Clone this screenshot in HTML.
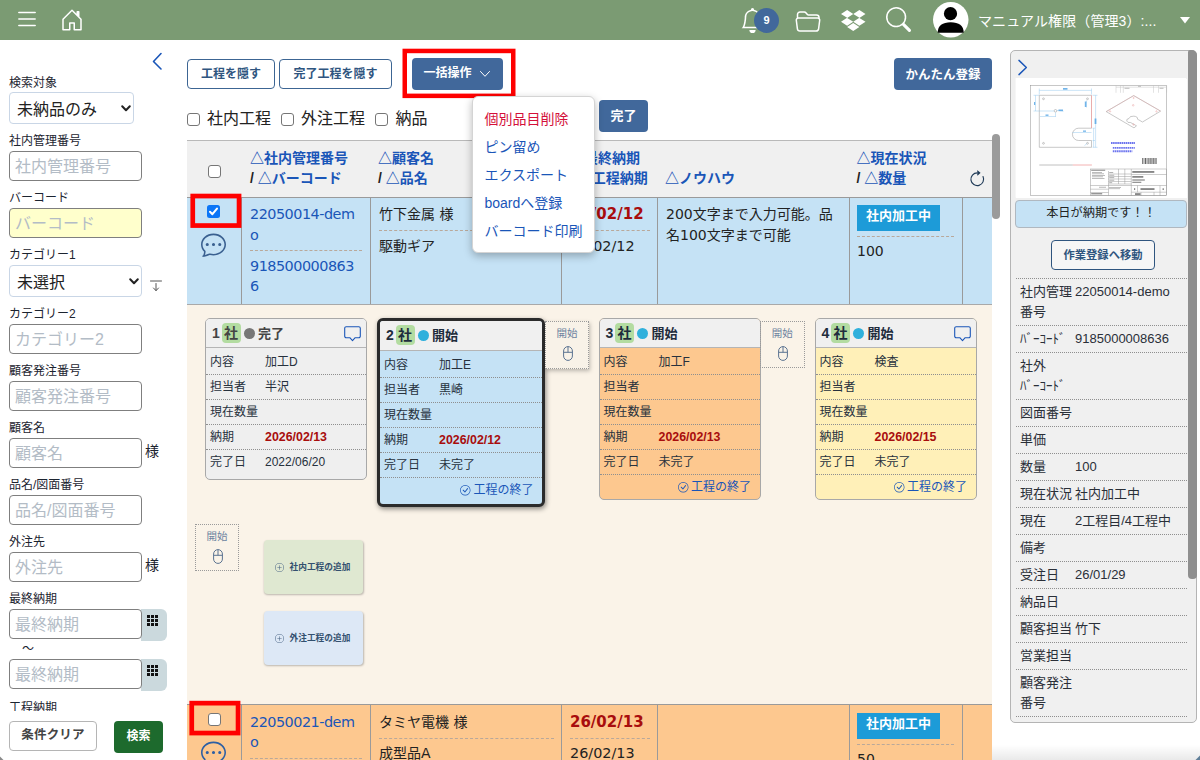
<!DOCTYPE html>
<html lang="ja">
<head>
<meta charset="utf-8">
<title>工程管理</title>
<style>
*{box-sizing:border-box;}
html,body{margin:0;padding:0;}
body{width:1200px;height:760px;overflow:hidden;background:#fff;position:relative;
  font-family:"Liberation Sans","Noto Sans CJK JP",sans-serif;color:#222;font-size:14px;}
.abs{position:absolute;}
svg{display:block;overflow:visible;}
/* header */
#hdr{position:absolute;left:0;top:0;width:1200px;height:40px;background:#7b9b73;}
#hdr .uname{position:absolute;left:978px;top:10px;font-size:14px;color:#fff;white-space:nowrap;line-height:22px;letter-spacing:0.1px;}
#hdr svg{position:absolute;}
.badge9{position:absolute;left:754px;top:7.5px;width:25px;height:25px;border-radius:50%;background:#41689b;color:#fff;
  font-size:11px;font-weight:bold;text-align:center;line-height:25px;}
/* sidebar */
#side{position:absolute;left:0;top:0;width:180px;height:760px;}
#side .lbl{position:absolute;left:9px;font-size:12px;color:#1c2430;line-height:16px;white-space:nowrap;margin-top:1px;}
#side .inp{position:absolute;left:9px;width:133px;height:30px;border:1px solid #7f7f7f;border-radius:4px;background:#fff;
  font-size:16px;color:#b3bcc6;padding:1px 0 0 5px;line-height:28px;white-space:nowrap;overflow:hidden;}
#side .sel{position:absolute;left:9px;height:32px;border:1px solid #c9d6e6;border-radius:4px;background:#fff;
  font-size:16px;color:#222;padding:1.500px 0 0 7px;line-height:30px;white-space:nowrap;}
#side .sama{position:absolute;left:145px;font-size:14px;color:#1c2430;line-height:18px;}
#side .cal{position:absolute;left:141px;width:26px;height:32px;background:#cbd9dd;border-radius:0 6px 6px 0;}
/* main */
.btn-o{position:absolute;height:30px;border:1px solid #3c6593;border-radius:4px;background:#fff;color:#2f557f;
  font-size:12px;font-weight:bold;line-height:28px;text-align:center;white-space:nowrap;}
.btn-f{position:absolute;border-radius:4px;background:#41689b;color:#fff;
  font-size:12px;font-weight:bold;text-align:center;white-space:nowrap;}
.tv{font-family:"DejaVu Sans","Noto Sans CJK JP",sans-serif;}
.cb{position:absolute;width:13px;height:13px;border:1px solid #767676;border-radius:3px;background:#fff;}
.redbox{position:absolute;border:4.5px solid #ff0000;}

.th{position:absolute;font-family:"Liberation Sans","Noto Sans CJK JP",sans-serif;font-weight:bold;font-size:14px;line-height:20px;color:#1a56b8;white-space:nowrap;}
.th .sl{color:#222;}
.vl{position:absolute;width:1px;background:#9a9a9a;}
.row{border-top:1px solid #9a9a9a;}
.lk{color:#1a56b8;font-size:14.400px;letter-spacing:-0.500px;}
.dsh{position:absolute;height:0;border-top:1px dashed #b9a89a;}
.stat{background:#1d9bd8;color:#fff;font-family:"Liberation Sans","Noto Sans CJK JP",sans-serif;font-weight:bold;font-size:13px;width:83px;height:26px;line-height:21.500px;text-align:center;}

.card{position:absolute;width:162px;border:1px solid #a8a8a8;border-radius:5px;overflow:hidden;font-family:"Liberation Sans","Noto Sans CJK JP",sans-serif;font-size:12px;color:#27313d;box-sizing:border-box;}
.card .hd{position:relative;height:28.500px;background:#f0f0f0;border-bottom:1px solid #b5b5b5;font-weight:bold;line-height:29px;color:#444;}
.card .hd .n{font-size:14px;}
.card .hd .bd{left:15.500px;top:4px;width:19px;height:20px;border-radius:4px;background:#b3dca1;font-size:14px;line-height:20px;text-align:center;}
.card .hd .dot{left:37.500px;top:9px;width:11px;height:11px;border-radius:50%;}
.card .hd .st{left:52px;top:0;font-size:13px;}
.card .r{position:relative;height:25px;border-top:1px dotted #8f8f8f;line-height:25px;white-space:nowrap;}
.card .r.first{border-top:none;height:26.500px;line-height:28px;}
.card .r .l{position:absolute;left:4px;}
.card .r .v{position:absolute;left:59px;}
.card .r .due{color:#a80d0d;font-size:12.400px;}
.card .hd.nv{color:#1f2d3d;}
.card .r .e{right:8.500px;top:0;font-size:12px;color:#1a56b8;}
.card.sel2 .hd{height:29.750px;}
.card.sel2{width:168px;border:3px solid #2b2b2b;border-radius:6px;box-shadow:1px 2px 5px rgba(0,0,0,0.45);}
.sb{position:absolute;border:1px dotted #9a9a9a;font-family:"Liberation Sans","Noto Sans CJK JP",sans-serif;font-size:10.500px;line-height:14px;color:#6d83a0;}
.add{position:absolute;width:99px;height:54px;border-radius:4px;box-shadow:0.500px 1px 2px rgba(0,0,0,0.25);font-family:"Liberation Sans","Noto Sans CJK JP",sans-serif;font-size:8.700px;font-weight:bold;color:#33506f;line-height:54px;white-space:nowrap;}

#panel{position:absolute;left:1010px;top:50px;width:187px;height:672.500px;background:#f0f0f0;border:1px solid #b4b4b4;border-radius:5px;font-size:13px;color:#2a2f38;}
.pr{position:absolute;left:5px;width:171px;border-top:1px dotted #8f8f8f;line-height:20px;padding-top:3px;}
.pr .pl{position:absolute;left:4px;top:2.500px;white-space:nowrap;}
.pr .pv{position:absolute;left:59px;top:2.500px;white-space:nowrap;}
</style>
</head>
<body>
<!--HEADER-->
<div id="hdr">
  <svg style="left:13.9px;top:6.4px" width="26" height="26" viewBox="0 0 16 16" fill="#fff"><path fill-rule="evenodd" d="M2.5 12a.5.5 0 0 1 .5-.5h10a.5.5 0 0 1 0 1H3a.5.5 0 0 1-.5-.5zm0-4a.5.5 0 0 1 .5-.5h10a.5.5 0 0 1 0 1H3a.5.5 0 0 1-.5-.5zm0-4a.5.5 0 0 1 .5-.5h10a.5.5 0 0 1 0 1H3a.5.5 0 0 1-.5-.5z"/></svg>
  <svg style="left:60px;top:7.5px" width="24" height="24" viewBox="0 0 16 16" fill="#fff"><path d="M8.354 1.146a.5.5 0 0 0-.708 0l-6 6A.5.5 0 0 0 1.500 7.500v7a.5.5 0 0 0 .5.5h4.500a.5.5 0 0 0 .5-.5v-4h2v4a.5.5 0 0 0 .5.5H14a.5.5 0 0 0 .5-.5v-7a.5.5 0 0 0-.146-.354L13 5.793V2.500a.5.5 0 0 0-.5-.5h-1a.5.5 0 0 0-.5.5v1.293L8.354 1.146zM2.500 14V7.707l5.500-5.500 5.500 5.500V14H10v-4a.5.5 0 0 0-.5-.5h-3a.5.5 0 0 0-.5.5v4H2.500z"/></svg>
  <svg style="left:740.4px;top:8px" width="25" height="25" viewBox="0 0 16 16" fill="#fff"><path d="M8 16a2 2 0 0 0 2-2H6a2 2 0 0 0 2 2zM8 1.918l-.797.161A4.002 4.002 0 0 0 4 6c0 .628-.134 2.197-.459 3.742-.16.767-.376 1.566-.663 2.258h10.244c-.287-.692-.502-1.490-.663-2.258C12.134 8.197 12 6.628 12 6a4.002 4.002 0 0 0-3.203-3.920L8 1.917zM14.220 12c.223.447.481.801.780 1H1c.299-.199.557-.553.780-1C2.680 10.200 3 6.880 3 6c0-2.420 1.720-4.440 4.005-4.901a1 1 0 1 1 1.990 0A5.002 5.002 0 0 1 13 6c0 .880.320 4.200 1.220 6z"/></svg>
  <div class="badge9">9</div>
  <svg style="left:795px;top:8.500px" width="26" height="24" viewBox="0 0 26 24" fill="none" stroke="#fff" stroke-width="1.500" stroke-linejoin="round" stroke-linecap="round"><path d="M2.500 8.500V5.500a2.500 2.500 0 0 1 2.500-2.500h4.200a2.500 2.500 0 0 1 1.900.9l1.300 1.500a1.500 1.500 0 0 0 1.100.5h8a2.500 2.500 0 0 1 2.500 2.500v.6"/><path d="M3.300 9h19.400a2 2 0 0 1 2 2.250l-1.100 8.600a2.500 2.500 0 0 1-2.500 2.150H4.900a2.500 2.500 0 0 1-2.500-2.150l-1.100-8.600A2 2 0 0 1 3.300 9z"/></svg>
  <svg style="left:840.8px;top:6.900px" width="24.500" height="24.500" viewBox="0 0 16 16" fill="#fff"><path d="M8.010 4.555 4.005 7.110 8.010 9.665 4.005 12.220 0 9.651l4.005-2.555L0 4.555 4.005 2 8.010 4.555zm-4.026 8.487 4.006-2.555 4.005 2.555-4.005 2.555-4.006-2.555zm4.026-3.390 4.005-2.556L8.010 4.555 11.995 2 16 4.555 11.995 7.110 16 9.665l-4.005 2.555L8.010 9.651z"/></svg>
  <svg style="left:885.6px;top:7.300px" width="25" height="25" viewBox="0 0 16 16" fill="#fff"><path d="M11.742 10.344a6.500 6.500 0 1 0-1.397 1.398h-.001c.030.040.062.078.098.115l3.850 3.850a1 1 0 0 0 1.415-1.414l-3.850-3.850a1.007 1.007 0 0 0-.115-.100zM12 6.500a5.500 5.500 0 1 1-11 0 5.500 5.500 0 0 1 11 0z"/></svg>
  <svg style="left:932.8px;top:2.300px" width="35.500" height="35.500" viewBox="0 0 35.500 35.500"><circle cx="17.750" cy="17.750" r="17.750" fill="#fff"/><circle cx="17.500" cy="11.700" r="6.600" fill="#000"/><path d="M4.700 30.700C4.700 23.500 9.500 20.200 17.700 20.200C25.900 20.200 30.700 23.500 30.700 30.700Z" fill="#000"/></svg>
  <div class="uname">マニュアル権限（管理3）:...</div>
  <svg style="left:1180px;top:16.800px" width="10" height="6.500" viewBox="0 0 10 6.500"><path d="M0 0h10L5 6.500z" fill="#fff"/></svg>
</div>
<!--/HEADER-->
<!--SIDE-->
<div id="side">
  <svg class="abs" style="left:152px;top:52px" width="10" height="18" viewBox="0 0 10 18" fill="none" stroke="#1a56b8" stroke-width="1.600" stroke-linecap="round" stroke-linejoin="round"><path d="M9 1.500L1.500 9.500L9 17"/></svg>
  <div class="lbl" style="top:74px">検索対象</div>
  <div class="sel" style="top:92px;width:125px;border-color:#c9d6e6">未納品のみ<svg class="abs" style="left:111px;top:12px" width="10" height="7" viewBox="0 0 10 7" fill="none" stroke="#222" stroke-width="2" stroke-linecap="round" stroke-linejoin="round"><path d="M1.200 1.200L5 5.200L8.800 1.200"/></svg></div>
  <div class="lbl" style="top:132px">社内管理番号</div>
  <div class="inp" style="top:151px">社内管理番号</div>
  <div class="lbl" style="top:189px">バーコード</div>
  <div class="inp" style="top:208px;background:#ffffcc">バーコード</div>
  <div class="lbl" style="top:246px">カテゴリー1</div>
  <div class="sel" style="top:265px;width:133px">未選択<svg class="abs" style="left:119px;top:12px" width="10" height="7" viewBox="0 0 10 7" fill="none" stroke="#222" stroke-width="2" stroke-linecap="round" stroke-linejoin="round"><path d="M1.200 1.200L5 5.200L8.800 1.200"/></svg></div>
  <svg class="abs" style="left:150px;top:280px" width="12" height="12" viewBox="0 0 12 12" fill="none" stroke="#555" stroke-width="1" stroke-linecap="round" stroke-linejoin="round"><path d="M0.500 1H11.500M6 3.500V10.500M3.500 8L6 10.700L8.500 8"/></svg>
  <div class="lbl" style="top:305px">カテゴリー2</div>
  <div class="inp" style="top:324px">カテゴリー2</div>
  <div class="lbl" style="top:362px">顧客発注番号</div>
  <div class="inp" style="top:381px">顧客発注番号</div>
  <div class="lbl" style="top:419px">顧客名</div>
  <div class="inp" style="top:438px">顧客名</div>
  <div class="sama" style="top:442px">様</div>
  <div class="lbl" style="top:476px">品名/図面番号</div>
  <div class="inp" style="top:495px">品名/図面番号</div>
  <div class="lbl" style="top:533px">外注先</div>
  <div class="inp" style="top:552px">外注先</div>
  <div class="sama" style="top:556px">様</div>
  <div class="lbl" style="top:590px">最終納期</div>
  <div class="cal" style="top:609px"><svg class="abs" style="left:6px;top:6px" width="11" height="11" viewBox="0 0 11 11" fill="#111"><path d="M0 0h3v3h-3zM4 0h3v3h-3zM8 0h3v3h-3zM0 4h3v3h-3zM4 4h3v3h-3zM8 4h3v3h-3zM0 8h3v3h-3zM4 8h3v3h-3zM8 8h3v3h-3z"/></svg></div>
  <div class="inp" style="top:609px">最終納期</div>
  <div class="lbl" style="top:640px;left:22px;font-size:12px">～</div>
  <div class="cal" style="top:659px"><svg class="abs" style="left:6px;top:6px" width="11" height="11" viewBox="0 0 11 11" fill="#111"><path d="M0 0h3v3h-3zM4 0h3v3h-3zM8 0h3v3h-3zM0 4h3v3h-3zM4 4h3v3h-3zM8 4h3v3h-3zM0 8h3v3h-3zM4 8h3v3h-3zM8 8h3v3h-3z"/></svg></div>
  <div class="inp" style="top:659px">最終納期</div>
  <div class="abs" style="left:0;top:696px;width:180px;height:14.500px;overflow:hidden"><div class="lbl" style="top:3.300px">工程納期</div></div>
  <div class="abs" style="left:9px;top:721px;width:88px;height:30px;border:1px solid #b5b5b5;border-radius:4px;background:#fff;font-size:12.500px;font-weight:bold;color:#444;text-align:center;line-height:27px;letter-spacing:0.2px">条件クリア</div>
  <div class="abs" style="left:114px;top:721px;width:49px;height:32px;border-radius:4px;background:#1d6a2d;font-size:12px;font-weight:bold;color:#fff;text-align:center;line-height:30px">検索</div>
</div>
<!--/SIDE-->
<!--MAIN-->
<div id="main">
  <div class="btn-o" style="left:187px;top:59px;width:88px">工程を隠す</div>
  <div class="btn-o" style="left:279px;top:59px;width:113px">完了工程を隠す</div>
  <svg class="abs" style="left:402px;top:48px" width="115" height="52" viewBox="0 0 115 52"><rect x="2.75" y="2.95" width="108.50" height="44.90" fill="none" stroke="#ff0000" stroke-width="4.5"/></svg>
  <div class="btn-f" style="left:412px;top:58px;width:91px;height:31.500px;line-height:31px;text-align:left;padding-left:11.500px">一括操作<svg class="abs" style="left:68px;top:13px" width="10" height="6" viewBox="0 0 10 6" fill="none" stroke="#fff" stroke-width="1" stroke-linecap="round" stroke-linejoin="round"><path d="M0.500 0.500L5 5.300L9.500 0.500"/></svg></div>
  <div class="btn-f" style="left:894px;top:58px;width:98px;height:31.500px;line-height:34px;font-size:12.500px">かんたん登録</div>
  <div class="cb" style="left:187px;top:113px"></div><div class="abs" style="left:207px;top:108px;font-size:16px;line-height:22px;color:#222">社内工程</div>
  <div class="cb" style="left:280.500px;top:113px"></div><div class="abs" style="left:301px;top:108px;font-size:16px;line-height:22px;color:#222">外注工程</div>
  <div class="cb" style="left:375px;top:113px"></div><div class="abs" style="left:395.500px;top:108px;font-size:16px;line-height:22px;color:#222">納品</div>
  <div class="btn-f" style="left:599px;top:100px;width:49px;height:32px;line-height:31px;font-size:13px">完了</div>
  <div id="tbl" class="abs tv" style="left:187px;top:140px;width:805px;height:620px;overflow:hidden;font-size:14px;line-height:20.500px;color:#222">
    <!-- header -->
    <div class="abs" style="left:0;top:0;width:805px;height:57px;background:#f0f0f0;border-top:1px solid #b9b9b9"></div>
    <div class="cb" style="left:21px;top:24.500px"></div>
    <div class="th" style="left:63px;top:8px">△社内管理番号<br><span class="sl">/ </span>△バーコード</div>
    <div class="th" style="left:191px;top:8px">△顧客名<br><span class="sl">/ </span>△品名</div>
    <div class="th" style="left:383px;top:8px">△最終納期<br><span class="sl">/ </span>△工程納期</div>
    <div class="th" style="left:478px;top:28px">△ノウハウ</div>
    <div class="th" style="left:669.500px;top:8px">△現在状況<br><span class="sl">/ </span>△数量</div>
    <svg class="abs" style="left:781px;top:30px" width="18.500" height="18.500" viewBox="0 0 16 16" fill="#1f3a57"><path fill-rule="evenodd" d="M8 3a5 5 0 1 0 4.546 2.914.5.5 0 0 1 .908-.417A6 6 0 1 1 8 2v1z"/><path d="M8 4.466V.534a.25.25 0 0 1 .41-.192l2.360 1.966c.12.1.12.284 0 .384L8.410 4.658A.25.25 0 0 1 8 4.466z"/></svg>
    <!-- row1 -->
    <div class="abs row" style="left:0;top:57px;width:805px;height:107px;background:#c5e2f5"></div>
    <div class="vl" style="left:54px;top:57px;height:107px"></div>
    <div class="vl" style="left:183px;top:57px;height:107px"></div>
    <div class="vl" style="left:374px;top:57px;height:107px"></div>
    <div class="vl" style="left:470px;top:57px;height:107px"></div>
    <div class="vl" style="left:661.500px;top:57px;height:107px"></div>
    <div class="vl" style="left:775px;top:57px;height:107px"></div>
    <div class="abs" style="left:20.200px;top:65px;width:13px;height:13px;border-radius:2.500px;background:#0b76f7"><svg width="13" height="13" viewBox="0 0 13 13" fill="none" stroke="#fff" stroke-width="2" stroke-linecap="round" stroke-linejoin="round"><path d="M3 6.800L5.400 9.200L10 3.600"/></svg></div>
    <svg class="abs" style="left:14px;top:91.500px" width="25" height="25" viewBox="0 0 16 16" fill="#3a6090"><path d="M5 8a1 1 0 1 1-2 0 1 1 0 0 1 2 0zm4 0a1 1 0 1 1-2 0 1 1 0 0 1 2 0zm3 1a1 1 0 1 0 0-2 1 1 0 0 0 0 2z"/><path d="m2.165 15.803.02-.004c1.830-.363 2.948-.842 3.468-1.105A9.060 9.060 0 0 0 8 15c4.418 0 8-3.134 8-7s-3.582-7-8-7-8 3.134-8 7c0 1.760.743 3.370 1.970 4.600a10.437 10.437 0 0 1-.524 2.318l-.3.011a10.722 10.722 0 0 1-.244.637c-.79.186.74.394.273.362a21.673 21.673 0 0 0 .693-.125zm.800-3.108a1 1 0 0 0-.287-.801C1.618 10.830 1 9.468 1 8c0-3.192 3.004-6 7-6s7 2.808 7 6c0 3.193-3.004 6-7 6a8.060 8.060 0 0 1-2.088-.272 1 1 0 0 0-.711.074c-.387.196-1.240.570-2.634.893a10.970 10.970 0 0 0 .398-2z"/></svg>
    <div class="abs lk" style="left:63px;top:64px;width:113px;white-space:nowrap">22050014-dem<br>o</div>
    <div class="dsh" style="left:63px;top:110px;width:112px"></div>
    <div class="abs lk" style="left:63px;top:115.500px;width:113px;white-space:nowrap">918500000863<br>6</div>
    <div class="abs" style="left:192px;top:64px">竹下金属 様</div>
    <div class="dsh" style="left:192px;top:90px;width:175px"></div>
    <div class="abs" style="left:192px;top:95.500px">駆動ギア</div>
    <div class="abs" style="left:383px;top:64px;font-weight:bold;color:#a80d0d;font-size:15px">26/02/12</div>
    <div class="dsh" style="left:383px;top:90px;width:80px"></div>
    <div class="abs" style="left:383px;top:95.500px;font-size:14.400px">26/02/12</div>
    <div class="abs" style="left:479px;top:64px;width:175px;word-break:break-all">200文字まで入力可能。品名100文字まで可能</div>
    <div class="abs stat" style="left:670px;top:65px">社内加工中</div>
    <div class="dsh" style="left:670px;top:96px;width:97px"></div>
    <div class="abs" style="left:670px;top:101px">100</div>
    <!-- detail -->
    <div class="abs" style="left:0;top:164px;width:805px;height:400px;background:#faf3e8;border-top:1px solid #a9a9a9"></div>
<!--CARDS-->
<div class="card" style="left:18px;top:178px;height:162px;background:#efefef"><div class="hd"><span class="abs n" style="left:6px;top:0">1</span><span class="abs bd">社</span><span class="abs dot" style="background:#777"></span><span class="abs st">完了</span><svg class="abs" style="left:138px;top:6.500px" width="17" height="16" viewBox="0 0 17 16" fill="none" stroke="#1a56b8" stroke-width="1.100" stroke-linejoin="round"><path d="M2.200 0.700H14.800A1.500 1.500 0 0 1 16.300 2.200V10.200A1.500 1.500 0 0 1 14.800 11.700H11.200L8.500 14.600L5.800 11.700H2.200A1.500 1.500 0 0 1 0.700 10.200V2.200A1.500 1.500 0 0 1 2.200 0.700Z"/></svg></div><div class="r first"><span class="l">内容</span><span class="v">加工D</span></div><div class="r"><span class="l">担当者</span><span class="v">半沢</span></div><div class="r"><span class="l">現在数量</span><span class="v"></span></div><div class="r"><span class="l">納期</span><span class="v"><b class="due">2026/02/13</b></span></div><div class="r"><span class="l">完了日</span><span class="v">2022/06/20</span></div></div>
<div class="card sel2" style="left:190px;top:178px;height:188.500px;background:#c5e2f5"><div class="hd nv"><span class="abs n" style="left:6px;top:0">2</span><span class="abs bd">社</span><span class="abs dot" style="background:#30b0dc"></span><span class="abs st">開始</span></div><div class="r first"><span class="l">内容</span><span class="v">加工E</span></div><div class="r"><span class="l">担当者</span><span class="v">黒崎</span></div><div class="r"><span class="l">現在数量</span><span class="v"></span></div><div class="r"><span class="l">納期</span><span class="v"><b class="due">2026/02/12</b></span></div><div class="r"><span class="l">完了日</span><span class="v">未完了</span></div><div class="r end"><svg class="abs" style="right:71.5px;top:7px" width="10.500" height="10.500" viewBox="0 0 16 16" fill="#1a56b8"><path d="M8 15A7 7 0 1 1 8 1a7 7 0 0 1 0 14zm0 1A8 8 0 1 0 8 0a8 8 0 0 0 0 16z"/><path d="M10.970 4.970a.235.235 0 0 0-.020.022L7.477 9.417 5.384 7.323a.750.750 0 0 0-1.060 1.060L6.970 11.030a.750.750 0 0 0 1.079-.020l3.992-4.990a.750.750 0 0 0-1.071-1.050z"/></svg><span class="abs e">工程の終了</span></div></div>
<div class="card" style="left:411.500px;top:178px;height:182px;background:#fdc88f"><div class="hd nv"><span class="abs n" style="left:6px;top:0">3</span><span class="abs bd">社</span><span class="abs dot" style="background:#30b0dc"></span><span class="abs st">開始</span></div><div class="r first"><span class="l">内容</span><span class="v">加工F</span></div><div class="r"><span class="l">担当者</span><span class="v"></span></div><div class="r"><span class="l">現在数量</span><span class="v"></span></div><div class="r"><span class="l">納期</span><span class="v"><b class="due">2026/02/13</b></span></div><div class="r"><span class="l">完了日</span><span class="v">未完了</span></div><div class="r end"><svg class="abs" style="right:71.5px;top:7px" width="10.500" height="10.500" viewBox="0 0 16 16" fill="#1a56b8"><path d="M8 15A7 7 0 1 1 8 1a7 7 0 0 1 0 14zm0 1A8 8 0 1 0 8 0a8 8 0 0 0 0 16z"/><path d="M10.970 4.970a.235.235 0 0 0-.020.022L7.477 9.417 5.384 7.323a.750.750 0 0 0-1.060 1.060L6.970 11.030a.750.750 0 0 0 1.079-.020l3.992-4.990a.750.750 0 0 0-1.071-1.050z"/></svg><span class="abs e">工程の終了</span></div></div>
<div class="card" style="left:627.500px;top:178px;height:182px;background:#fff0b8"><div class="hd nv"><span class="abs n" style="left:6px;top:0">4</span><span class="abs bd">社</span><span class="abs dot" style="background:#30b0dc"></span><span class="abs st">開始</span><svg class="abs" style="left:138px;top:6.500px" width="17" height="16" viewBox="0 0 17 16" fill="none" stroke="#1a56b8" stroke-width="1.100" stroke-linejoin="round"><path d="M2.200 0.700H14.800A1.500 1.500 0 0 1 16.300 2.200V10.200A1.500 1.500 0 0 1 14.800 11.700H11.200L8.500 14.600L5.800 11.700H2.200A1.500 1.500 0 0 1 0.700 10.200V2.200A1.500 1.500 0 0 1 2.200 0.700Z"/></svg></div><div class="r first"><span class="l">内容</span><span class="v">検査</span></div><div class="r"><span class="l">担当者</span><span class="v"></span></div><div class="r"><span class="l">現在数量</span><span class="v"></span></div><div class="r"><span class="l">納期</span><span class="v"><b class="due">2026/02/15</b></span></div><div class="r"><span class="l">完了日</span><span class="v">未完了</span></div><div class="r end"><svg class="abs" style="right:71.5px;top:7px" width="10.500" height="10.500" viewBox="0 0 16 16" fill="#1a56b8"><path d="M8 15A7 7 0 1 1 8 1a7 7 0 0 1 0 14zm0 1A8 8 0 1 0 8 0a8 8 0 0 0 0 16z"/><path d="M10.970 4.970a.235.235 0 0 0-.020.022L7.477 9.417 5.384 7.323a.750.750 0 0 0-1.060 1.060L6.970 11.030a.750.750 0 0 0 1.079-.020l3.992-4.990a.750.750 0 0 0-1.071-1.050z"/></svg><span class="abs e">工程の終了</span></div></div>
<div class="sb" style="left:358px;top:181px;width:44px;height:47.5px;background:#f8f2e8;box-shadow:1px 2px 4px rgba(0,0,0,0.25)"><span class="abs" style="left:0;width:100%;top:3.700px;text-align:center">開始</span><svg class="abs" style="left:16.5px;top:24.2px" width="10" height="15" viewBox="0 0 10 15" fill="none" stroke="#5b7391" stroke-width="1"><rect x="0.600" y="0.600" width="8.800" height="13.800" rx="4.400"/><path d="M0.600 6.300H9.400M5 0.600V6.300"/></svg></div>
<div class="sb" style="left:572.5px;top:181px;width:45.5px;height:47px;"><span class="abs" style="left:0;width:100%;top:3.700px;text-align:center">開始</span><svg class="abs" style="left:17.25px;top:24.2px" width="10" height="15" viewBox="0 0 10 15" fill="none" stroke="#5b7391" stroke-width="1"><rect x="0.600" y="0.600" width="8.800" height="13.800" rx="4.400"/><path d="M0.600 6.300H9.400M5 0.600V6.300"/></svg></div>
<div class="sb" style="left:8px;top:384px;width:44px;height:47px;"><span class="abs" style="left:0;width:100%;top:3.700px;text-align:center">開始</span><svg class="abs" style="left:16.5px;top:24.2px" width="10" height="15" viewBox="0 0 10 15" fill="none" stroke="#5b7391" stroke-width="1"><rect x="0.600" y="0.600" width="8.800" height="13.800" rx="4.400"/><path d="M0.600 6.300H9.400M5 0.600V6.300"/></svg></div>
<div class="add" style="left:76.500px;top:400px;background:#dfe8d1"><svg class="abs" style="left:11px;top:22.500px" width="9" height="9" viewBox="0 0 16 16" fill="#4a6585"><path d="M8 15A7 7 0 1 1 8 1a7 7 0 0 1 0 14zm0 1A8 8 0 1 0 8 0a8 8 0 0 0 0 16z"/><path d="M8 4a.5.5 0 0 1 .5.5v3h3a.5.5 0 0 1 0 1h-3v3a.5.5 0 0 1-1 0v-3h-3a.5.5 0 0 1 0-1h3v-3A.5.5 0 0 1 8 4z"/></svg><span class="abs" style="left:26px;top:0">社内工程の追加</span></div>
<div class="add" style="left:76.500px;top:471px;background:#dde8f6"><svg class="abs" style="left:11px;top:22.500px" width="9" height="9" viewBox="0 0 16 16" fill="#4a6585"><path d="M8 15A7 7 0 1 1 8 1a7 7 0 0 1 0 14zm0 1A8 8 0 1 0 8 0a8 8 0 0 0 0 16z"/><path d="M8 4a.5.5 0 0 1 .5.5v3h3a.5.5 0 0 1 0 1h-3v3a.5.5 0 0 1-1 0v-3h-3a.5.5 0 0 1 0-1h3v-3A.5.5 0 0 1 8 4z"/></svg><span class="abs" style="left:26px;top:0">外注工程の追加</span></div>
<!--/CARDS-->
    <!-- row2 -->
    <div class="abs row" style="left:0;top:564px;width:805px;height:60px;background:#fdc88f"></div>
    <div class="vl" style="left:54px;top:564px;height:60px"></div>
    <div class="vl" style="left:183px;top:564px;height:60px"></div>
    <div class="vl" style="left:374px;top:564px;height:60px"></div>
    <div class="vl" style="left:470px;top:564px;height:60px"></div>
    <div class="vl" style="left:661.500px;top:564px;height:60px"></div>
    <div class="vl" style="left:775px;top:564px;height:60px"></div>
    <div class="cb" style="left:20.500px;top:572.500px"></div>
    <svg class="abs" style="left:14px;top:600px" width="25" height="25" viewBox="0 0 16 16" fill="#2d5fa4"><path d="M5 8a1 1 0 1 1-2 0 1 1 0 0 1 2 0zm4 0a1 1 0 1 1-2 0 1 1 0 0 1 2 0zm3 1a1 1 0 1 0 0-2 1 1 0 0 0 0 2z"/><path d="m2.165 15.803.02-.004c1.830-.363 2.948-.842 3.468-1.105A9.060 9.060 0 0 0 8 15c4.418 0 8-3.134 8-7s-3.582-7-8-7-8 3.134-8 7c0 1.760.743 3.370 1.970 4.600a10.437 10.437 0 0 1-.524 2.318l-.3.011a10.722 10.722 0 0 1-.244.637c-.79.186.74.394.273.362a21.673 21.673 0 0 0 .693-.125zm.800-3.108a1 1 0 0 0-.287-.801C1.618 10.830 1 9.468 1 8c0-3.192 3.004-6 7-6s7 2.808 7 6c0 3.193-3.004 6-7 6a8.060 8.060 0 0 1-2.088-.272 1 1 0 0 0-.711.074c-.387.196-1.240.570-2.634.893a10.970 10.970 0 0 0 .398-2z"/></svg>
    <div class="abs lk" style="left:63px;top:571.500px;width:113px;white-space:nowrap">22050021-dem<br>o</div>
    <div class="dsh" style="left:63px;top:617.500px;width:112px"></div>
    <div class="abs" style="left:192px;top:571.500px">タミヤ電機 様</div>
    <div class="dsh" style="left:192px;top:597.500px;width:175px"></div>
    <div class="abs" style="left:192px;top:603px">成型品A</div>
    <div class="abs" style="left:383px;top:571.500px;font-weight:bold;color:#a80d0d;font-size:15px">26/02/13</div>
    <div class="dsh" style="left:383px;top:597.500px;width:80px"></div>
    <div class="abs" style="left:383px;top:603px;font-size:14.400px">26/02/13</div>
    <div class="abs stat" style="left:670px;top:572.500px">社内加工中</div>
    <div class="dsh" style="left:670px;top:603.500px;width:97px"></div>
    <div class="abs" style="left:670px;top:608.500px">50</div>
  </div>
  <!-- red boxes over table -->
  <svg class="abs" style="left:190px;top:193px" width="53" height="36" viewBox="0 0 53 36"><rect x="2.75" y="3.05" width="46.30" height="29.50" fill="none" stroke="#ff0000" stroke-width="4.7"/></svg>
  <svg class="abs" style="left:189px;top:700px" width="53" height="37" viewBox="0 0 53 37"><rect x="2.75" y="3.15" width="46.30" height="29.90" fill="none" stroke="#ff0000" stroke-width="4.7"/></svg>
  <!-- scrollbar -->
  <div class="abs" style="left:992px;top:134px;width:8px;height:85px;border-radius:4px;background:#9b9b9b"></div>

  <!-- dropdown -->
  <div class="abs" style="left:472px;top:95.500px;width:122.500px;height:157px;background:#fff;border:1px solid #d4d4d4;border-radius:6px;box-shadow:0 3px 8px rgba(0,0,0,0.28);font-size:14px;line-height:28px;color:#1a56b8;padding:8px 0 0 11.500px;white-space:nowrap">
    <div style="color:#d4103a">個別品目削除</div><div>ピン留め</div><div>エクスポート</div><div>boardへ登録</div><div>バーコード印刷</div>
  </div>
</div>
<!--/MAIN-->
<!--PANEL-->
<div id="panel">
<svg class="abs" style="left:7px;top:7.500px" width="9.500" height="17" viewBox="0 0 10 17" fill="none" stroke="#1a56b8" stroke-width="1.500" stroke-linecap="round" stroke-linejoin="round"><path d="M1 1L8.800 8.500L1 16"/></svg>
<div class="abs" style="left:5px;top:27.500px;width:171px;height:119.500px;background:#fff"></div>
<!--DRAWING-->
<svg class="abs" style="left:3px;top:25px;filter:blur(0.3px)" width="174" height="124" viewBox="0 0 174 124" fill="none">
<rect x="1.600" y="2" width="170.600" height="119.600" fill="#fff"/>
<rect x="16.300" y="9.300" width="136.300" height="110.400" stroke="#8f8f8f" stroke-width="0.500"/>
<g stroke="#9a9a9a" stroke-width="0.550">
<path d="M77.500 52.200H64.600A6.150 6.150 0 0 0 64.600 64.500H77.500V71.300H25.300V19.300H77.500"/>
<circle cx="29.500" cy="22.800" r="0.900"/><circle cx="73.500" cy="22.800" r="0.900"/><circle cx="29.500" cy="67.300" r="0.900"/><circle cx="73.500" cy="67.300" r="0.900"/><circle cx="41.500" cy="34.800" r="1.300"/>
<path d="M92.200 35.600L119.700 19.600L146.600 35.100L128.500 46L123.500 43.200A3.500 2.200 0 0 0 115 42.500A3 2 0 0 0 116.500 46.500L122.500 49.800L120 51.900Z"/>
<path d="M25.300 89H58.800" stroke-width="0.800" stroke="#b0b0b0"/>
</g>
<path d="M77.500 19.300V52.200" stroke="#e08a8a" stroke-width="0.700"/>
<path d="M58.800 89H77.900" stroke="#f0a0a0" stroke-width="0.800"/>
<g stroke="#e9a0a0" stroke-width="0.500"><path d="M119.700 19.600L146.600 35.100M92.200 35.600L119.700 19.600" opacity="0.700"/><circle cx="119.200" cy="29.300" r="0.800"/><circle cx="96" cy="35.400" r="0.700"/><circle cx="142.500" cy="35.400" r="0.700"/><circle cx="119.500" cy="48.500" r="0.700"/><circle cx="119.600" cy="22" r="0.600"/></g>
<g stroke="#8cc4ee" stroke-width="0.450">
<path d="M25.300 14.400H77.500M25.300 12.500V18.500M77.500 12.500V18.500"/>
<path d="M21.500 19.300V35M19.500 19.300H25M19.500 35H40"/>
<path d="M26 40.500H41.500M41.500 36.500V41"/>
<path d="M81.600 19.300V71.300M78.500 19.300H83.500M78.500 71.300H83.500"/>
<path d="M79.600 52.200V71.300M78.500 52.200H81M78.500 64.500H81"/>
<path d="M72.500 24.500V31.500"/>
<path d="M58.500 56.500H77.500"/>
<path d="M43 34.500L49.500 35.200"/>
<path d="M70.500 69.500L73 67.500"/>
</g>
<g fill="#5aa8e6" opacity="0.850"><rect x="49" y="12" width="4.500" height="1.700"/><rect x="20" y="26" width="1.200" height="3"/><rect x="31.500" y="38.500" width="3" height="1.400"/><rect x="80.600" y="42.500" width="1.800" height="5.500"/><rect x="70.800" y="25.500" width="1.600" height="5.500"/><rect x="69" y="54.500" width="3" height="1.300"/><rect x="44.500" y="33.500" width="4.500" height="1.600"/></g>
<g stroke="#3b46e8" opacity="0.750" stroke-width="1.900" stroke-dasharray="1.600 0.500"><path d="M97 67H121M98.800 71.900H120.800M98.800 75.300H118.300"/></g>
<g fill="#666"><path d="M128.200 82h1v6h-1zM129.800 82h.5v6h-.5zM130.900 82h1.200v6h-1.200zM132.700 82h.5v6h-.5zM133.700 82h1v6h-1zM135.300 82h.5v6h-.5zM136.300 82h1.300v6h-1.300zM138.200 82h.5v6h-.5zM139.200 82h1v6h-1zM140.700 82h.5v6h-.5zM141.600 82h1v6h-1z"/></g>
<g stroke="#9a9a9a" stroke-width="0.500">
<rect x="76.400" y="93" width="76.200" height="26.700"/>
<path d="M117.300 93V119.700M76.400 109.500H117.300M94.500 95V119.700M104.500 93V108M110.800 93V108M94.500 98H117.300M94.500 100.500H117.300M94.500 103H117.300M94.500 105.500H117.300M94.500 108H117.300M117.300 98.500H152.600M117.300 109.500H152.600M117.300 116.200H152.600M123.500 109.500V116.200M146 109.500V119.700M76.400 113.200H94.500M76.400 116.500H94.500M140 116.200V119.700M127 116.200V119.700"/>
</g>
<g fill="#444" opacity="0.800"><rect x="118.300" y="95.200" width="22" height="1.500"/><rect x="118.300" y="100.200" width="11" height="1.400"/><rect x="118.300" y="103.500" width="12.500" height="1"/><rect x="118.300" y="105.800" width="9" height="0.900"/><rect x="126.500" y="112.300" width="14" height="1.500"/><rect x="120" y="112.300" width="1.200" height="1.500"/><rect x="148.500" y="112.500" width="1.500" height="1.200"/><rect x="121" y="117.300" width="5.500" height="1.500"/><rect x="77.200" y="93.800" width="14" height="0.800"/><rect x="77.200" y="117.300" width="11" height="1"/><rect x="85" y="110.800" width="7" height="0.800" opacity="0.600"/><rect x="95" y="111" width="12" height="0.700" opacity="0.600"/><rect x="95" y="112.400" width="11" height="0.700" opacity="0.600"/></g>
<g fill="#777" opacity="0.700"><rect x="78" y="96" width="10" height="0.700"/><rect x="78" y="97.500" width="12" height="0.700"/><rect x="78" y="99" width="13" height="0.700"/><rect x="78" y="100.500" width="11" height="0.700"/><rect x="78" y="102" width="12.500" height="0.700"/><rect x="95.200" y="96" width="4" height="0.800"/><rect x="95.200" y="98.800" width="5" height="0.800"/><rect x="95.200" y="101.300" width="5" height="0.800"/><rect x="95.200" y="103.800" width="5" height="0.800"/><rect x="95.200" y="106.300" width="3" height="0.800"/></g>
<g stroke="#c0c0c0" stroke-width="0.450"><path d="M102 9.300V16.800M102 11.200H152.600M106.500 9.300V16.800M109.300 9.300V16.800M139.500 9.300V16.800M144.500 9.300V16.800M152.600 9.300V16.800"/></g>
<g fill="#aaa"><rect x="110.500" y="11.800" width="5" height="0.800"/><rect x="145.500" y="11.800" width="4" height="0.800"/><rect x="124" y="9.900" width="3" height="0.700"/></g>
</svg>
<!--/DRAWING-->
<div class="abs" style="left:4px;top:149px;width:172px;height:28px;background:#c5e2f5;border:1px solid #b0b8c0;border-radius:4px;font-size:12.200px;line-height:25px;text-align:center;color:#222">本日が納期です！！</div>
<div class="abs" style="left:40px;top:188.500px;width:104px;height:30px;border:1px solid #2f557f;border-radius:4px;background:#f6f6f6;font-size:11.300px;font-weight:bold;line-height:28px;text-align:center;color:#2f557f">作業登録へ移動</div>
<div class="pr" style="top:227px;height:47px"><span class="pl">社内管理<br>番号</span><span class="pv">22050014-demo</span></div>
<div class="pr" style="top:274px;height:27px"><span class="pl">ﾊﾞｰｺｰﾄﾞ</span><span class="pv">9185000008636</span></div>
<div class="pr" style="top:301px;height:47px"><span class="pl">社外<br>ﾊﾞｰｺｰﾄﾞ</span><span class="pv"></span></div>
<div class="pr" style="top:348px;height:27px"><span class="pl">図面番号</span><span class="pv"></span></div>
<div class="pr" style="top:375px;height:27px"><span class="pl">単価</span><span class="pv"></span></div>
<div class="pr" style="top:402px;height:27px"><span class="pl">数量</span><span class="pv">100</span></div>
<div class="pr" style="top:429px;height:27px"><span class="pl">現在状況</span><span class="pv">社内加工中</span></div>
<div class="pr" style="top:456px;height:27px"><span class="pl">現在</span><span class="pv">2工程目/4工程中</span></div>
<div class="pr" style="top:483px;height:27px"><span class="pl">備考</span><span class="pv"></span></div>
<div class="pr" style="top:510px;height:27px"><span class="pl">受注日</span><span class="pv">26/01/29</span></div>
<div class="pr" style="top:537px;height:27px"><span class="pl">納品日</span><span class="pv"></span></div>
<div class="pr" style="top:564px;height:27px"><span class="pl">顧客担当</span><span class="pv">竹下</span></div>
<div class="pr" style="top:591px;height:27px"><span class="pl">営業担当</span><span class="pv"></span></div>
<div class="pr" style="top:618px;height:47px"><span class="pl">顧客発注<br>番号</span><span class="pv"></span></div>
<div class="pr" style="top:665px;height:2px"></div>
<div class="abs" style="left:177px;top:-1px;width:8.500px;height:528.500px;border-radius:2px 5px 4px 4px;background:#8f8f8f"></div>
</div>
<!--/PANEL-->
<div class="abs" style="left:992px;top:745px;width:208px;height:15px;background:linear-gradient(to bottom,rgba(0,0,0,0),rgba(0,0,0,0.085))"></div>
<svg class="abs" style="left:1194px;top:754px" width="6" height="6" viewBox="0 0 6 6"><path d="M6 1.500V6H1.500Z" fill="#5f7f99"/></svg>
<svg class="abs" style="left:0;top:755px" width="5" height="5" viewBox="0 0 5 5"><path d="M0 1.500L3.500 5H0Z" fill="#8a8a8a"/></svg>
</body>
</html>
